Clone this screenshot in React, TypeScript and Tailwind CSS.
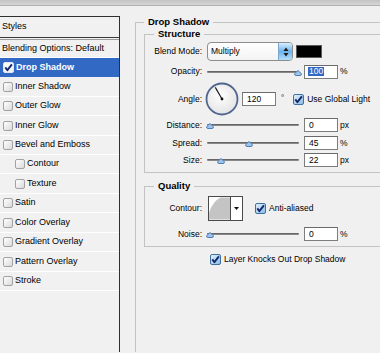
import React from "react";

function BoxUnchecked() {
  return (
    <span className="block w-[10px] h-[10px] shrink-0 rounded-[2px] border border-[#a2a2a2] bg-gradient-to-br from-[#ffffff] to-[#dadada]" />
  );
}

function BoxChecked({ white = false }: { white?: boolean }) {
  return (
    <svg width="11" height="11" viewBox="0 0 11 11" className="shrink-0 block">
      <defs>
        <linearGradient id={white ? "cbw" : "cbb"} x1="0" y1="0" x2="1" y2="1">
          <stop offset="0" stopColor={white ? "#ffffff" : "#eaf4fd"} />
          <stop offset="1" stopColor={white ? "#eeeeee" : "#86b9e6"} />
        </linearGradient>
      </defs>
      <rect x="0.5" y="0.5" width="10" height="10" rx="1.5" fill={`url(#${white ? "cbw" : "cbb"})`} stroke={white ? "#dfe7f5" : "#41709f"} />
      <path d="M2.3 5.4 L4.4 8.2 L8.9 2.4" stroke="#10296b" strokeWidth="1.9" fill="none" strokeLinejoin="round" />
    </svg>
  );
}

function Slider({ thumb }: { thumb: number }) {
  return (
    <div className="relative w-[92px] h-[8px] flex items-center">
      <div className="w-full h-[2px] rounded-full bg-gradient-to-b from-[#555555] to-[#9a9a9a]" />
      <svg width="8" height="6" viewBox="0 0 8 6" className="absolute top-[2px]" style={{ left: thumb - 4 }}>
        <path d="M4 0.5 L7.5 3.8 Q7.5 5.5 6 5.5 L2 5.5 Q0.5 5.5 0.5 3.8 Z" fill="#9ec4ec" stroke="#4f7fb8" strokeWidth="1" />
      </svg>
    </div>
  );
}

function Field({ value, selected = false }: { value: string; selected?: boolean }) {
  return (
    <div className="w-[34px] h-[14px] border border-[#7d7d7d] border-t-[#6a6a6a] bg-white flex items-center pl-[3px] text-[8.5px] leading-none">
      {selected ? <span className="bg-[#3168c4] text-white px-[1px]">{value}</span> : <span className="pl-[1px]">{value}</span>}
    </div>
  );
}

function Label({ children }: { children: React.ReactNode }) {
  return <div className="w-[57px] text-right shrink-0">{children}</div>;
}

function Legend({ children, left }: { children: React.ReactNode; left: string }) {
  return (
    <span className={`absolute -top-[7px] ${left} px-[4px] bg-[#f0f0f0] text-[9.5px] font-bold leading-[12px] whitespace-nowrap`}>
      {children}
    </span>
  );
}

function SliderRow({ label, thumb, value, unit, cls, selected = false }: { label: string; thumb: number; value: string; unit: string; cls: string; selected?: boolean }) {
  return (
    <div className={`flex items-center ${cls}`}>
      <Label>{label}</Label>
      <div className="ml-[5px]">
        <Slider thumb={thumb} />
      </div>
      <div className="ml-[5px]">
        <Field value={value} selected={selected} />
      </div>
      <div className="ml-[2px]">{unit}</div>
    </div>
  );
}

const listRows: { label: string; h: string; indent?: boolean }[] = [
  { label: "Inner Shadow", h: "h-[20px]" },
  { label: "Outer Glow", h: "h-[19px]" },
  { label: "Inner Glow", h: "h-[20px]" },
  { label: "Bevel and Emboss", h: "h-[19px]" },
  { label: "Contour", h: "h-[19px]", indent: true },
  { label: "Texture", h: "h-[20px]", indent: true },
  { label: "Satin", h: "h-[19px]" },
  { label: "Color Overlay", h: "h-[20px]" },
  { label: "Gradient Overlay", h: "h-[19px]" },
  { label: "Pattern Overlay", h: "h-[20px]" },
  { label: "Stroke", h: "h-[19px]" },
];

export default function App() {
  return (
    <div className="w-[380px] h-[353px] overflow-hidden bg-[#f0f0f0] text-black font-['Liberation_Sans',Arial,sans-serif]">
      {/* title bar remnant */}
      <div className="h-[6px] bg-gradient-to-b from-[#c2c2c2] to-[#d6d6d6] border-b border-[#b0b0b0]" />
      <div className="flex pt-[10px]">
        {/* left list */}
        <div className="w-[120px] h-[336px] shrink-0 border-t border-r border-[#303030] bg-[#f1f1f1] text-[9px]">
          <div className="h-[21px] border-b border-[#3a3a3a] flex items-center pl-[2px]">Styles</div>
          <div className="h-[1px]" />
          <div className="h-[19px] border-t border-[#9c9c9c] border-b border-b-white flex items-center pl-[2px]">
            Blending Options: Default
          </div>
          <div className="h-[19px] bg-[#3169c5] flex items-center pl-[3px] text-white font-bold">
            <BoxChecked white />
            <span className="ml-[2px]">Drop Shadow</span>
          </div>
          {listRows.map((r) => (
            <div key={r.label} className={`${r.h} border-b border-white flex items-center ${r.indent ? "pl-[15px]" : "pl-[3px]"}`}>
              <BoxUnchecked />
              <span className="ml-[2px]">{r.label}</span>
            </div>
          ))}
        </div>

        {/* right content */}
        <div className="ml-[15px] flex-1 min-w-0 pt-[6px] text-[8.5px]">
          <div className="relative h-[330px] border-l border-t border-[#c3c3c3]">
            <Legend left="left-[8px]">Drop Shadow</Legend>

            <div className="relative ml-[8px] mt-[11px] border-l border-t border-b border-[#c3c3c3] pt-[5px] pb-[5px]">
              <Legend left="left-[9px]">Structure</Legend>
              {/* Blend mode */}
              <div className="flex items-center mt-[2px] h-[19px]">
                <Label>Blend Mode:</Label>
                <div className="ml-[5px] w-[86px] h-[19px] rounded-[4px] border border-[#8d8d8d] bg-gradient-to-b from-white to-[#f3f3f3] flex items-center overflow-hidden">
                  <span className="pl-[3px] flex-1">Multiply</span>
                  <div className="w-[14px] h-full bg-gradient-to-b from-[#d8eefc] via-[#6db2ec] to-[#b5def9] border-l border-[#7aa7d0] flex items-center justify-center">
                    <svg width="6" height="10" viewBox="0 0 6 10">
                      <path d="M3 0.5 L5.5 4 L0.5 4 Z" fill="#1a1a1a" />
                      <path d="M3 9.5 L5.5 6 L0.5 6 Z" fill="#1a1a1a" />
                    </svg>
                  </div>
                </div>
                <div className="ml-[3px] w-[26px] h-[13px] bg-black border border-[#5a5a5a]" />
              </div>
              <SliderRow label="Opacity:" thumb={91} value="100" unit="%" cls="mt-[3px] h-[15px]" selected />
              {/* Angle */}
              <div className="flex items-center mt-[3px] h-[34px]">
                <Label>Angle:</Label>
                <svg width="34" height="34" viewBox="0 0 34 34" className="ml-[3px] shrink-0">
                  <defs>
                    <radialGradient id="dial" cx="0.45" cy="0.4" r="0.6">
                      <stop offset="0" stopColor="#ffffff" />
                      <stop offset="1" stopColor="#e4e4e4" />
                    </radialGradient>
                  </defs>
                  <circle cx="17" cy="17" r="15.5" fill="url(#dial)" stroke="#51668f" strokeWidth="1.8" />
                  <line x1="17" y1="17" x2="10.3" y2="5.4" stroke="#111" strokeWidth="1.1" />
                  <circle cx="17" cy="17" r="1.4" fill="#111" />
                </svg>
                <div className="ml-[3px]">
                  <Field value="120" />
                </div>
                <span className="ml-[5px] self-start mt-[10px] text-[8px]">°</span>
                <div className="ml-[9px]">
                  <BoxChecked />
                </div>
                <span className="ml-[3px] whitespace-nowrap">Use Global Light</span>
              </div>
              <SliderRow label="Distance:" thumb={3} value="0" unit="px" cls="mt-[2px] h-[14px]" />
              <SliderRow label="Spread:" thumb={42} value="45" unit="%" cls="mt-[4px] h-[14px]" />
              <SliderRow label="Size:" thumb={14} value="22" unit="px" cls="mt-[3px] h-[14px]" />
            </div>

            <div className="relative ml-[8px] mt-[13px] border-l border-t border-b border-[#c3c3c3] pt-[5px] pb-[5px]">
              <Legend left="left-[9px]">Quality</Legend>
              <div className="flex items-center mt-[4px] h-[25px]">
                <Label>Contour:</Label>
                <div className="ml-[6px] w-[35px] h-[25px] border border-[#4a4a4a] bg-white flex">
                  <svg width="22" height="23" viewBox="0 0 22 23" className="block border-r border-[#4a4a4a]">
                    <rect x="0" y="0" width="22" height="23" fill="#ffffff" />
                    <path d="M0 23 L0 16 Q4 4 12 0 L22 0 L22 23 Z" fill="#c4c4c4" />
                  </svg>
                  <div className="flex-1 flex items-center justify-center bg-white">
                    <svg width="5" height="3" viewBox="0 0 5 3">
                      <path d="M0 0 L5 0 L2.5 3 Z" fill="#111" />
                    </svg>
                  </div>
                </div>
                <div className="ml-[12px]">
                  <BoxChecked />
                </div>
                <span className="ml-[3px]">Anti-aliased</span>
              </div>
              <SliderRow label="Noise:" thumb={3} value="0" unit="%" cls="mt-[6px] h-[14px]" />
            </div>

            <div className="flex items-center mt-[6px] h-[12px] pl-[74px]">
              <BoxChecked />
              <span className="ml-[3px] whitespace-nowrap">Layer Knocks Out Drop Shadow</span>
            </div>
          </div>
        </div>
      </div>
    </div>
  );
}
